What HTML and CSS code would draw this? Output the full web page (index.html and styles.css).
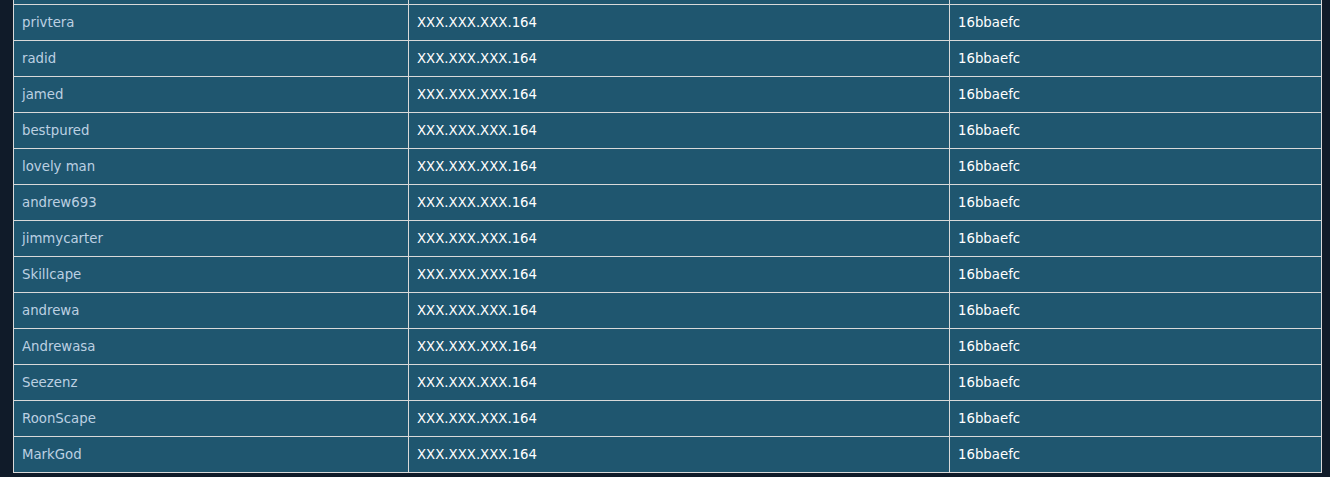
FILE: index.html
```html
<!DOCTYPE html>
<html>
<head>
<meta charset="utf-8">
<link rel="stylesheet" href="styles.css">
</head>
<body>
<div class="page">
  <table class="grid">
    <colgroup><col class="c1"><col class="c2"><col class="c3"></colgroup>
    <tbody>
      <tr class="offscreen"><td class="name"></td><td></td><td></td></tr>
      <tr><td class="name">privtera</td><td>XXX.XXX.XXX.164</td><td>16bbaefc</td></tr>
      <tr><td class="name">radid</td><td>XXX.XXX.XXX.164</td><td>16bbaefc</td></tr>
      <tr><td class="name">jamed</td><td>XXX.XXX.XXX.164</td><td>16bbaefc</td></tr>
      <tr><td class="name">bestpured</td><td>XXX.XXX.XXX.164</td><td>16bbaefc</td></tr>
      <tr><td class="name">lovely man</td><td>XXX.XXX.XXX.164</td><td>16bbaefc</td></tr>
      <tr><td class="name">andrew693</td><td>XXX.XXX.XXX.164</td><td>16bbaefc</td></tr>
      <tr><td class="name">jimmycarter</td><td>XXX.XXX.XXX.164</td><td>16bbaefc</td></tr>
      <tr><td class="name">Skillcape</td><td>XXX.XXX.XXX.164</td><td>16bbaefc</td></tr>
      <tr><td class="name">andrewa</td><td>XXX.XXX.XXX.164</td><td>16bbaefc</td></tr>
      <tr><td class="name">Andrewasa</td><td>XXX.XXX.XXX.164</td><td>16bbaefc</td></tr>
      <tr><td class="name">Seezenz</td><td>XXX.XXX.XXX.164</td><td>16bbaefc</td></tr>
      <tr><td class="name">RoonScape</td><td>XXX.XXX.XXX.164</td><td>16bbaefc</td></tr>
      <tr><td class="name">MarkGod</td><td>XXX.XXX.XXX.164</td><td>16bbaefc</td></tr>
    </tbody>
  </table>
</div>
</body>
</html>
```

FILE: styles.css
```css
html, body {
  margin: 0;
  padding: 0;
  background: #101b29;
  height: 100%;
  overflow: hidden;
}
.page {
  padding: 0 0 0 13px;
  margin-top: -32px;
  font-family: "DejaVu Sans", Verdana, sans-serif;
  font-size: 13.3px;
}
.grid {
  border-collapse: collapse;
  table-layout: fixed;
  width: 1308px;
  background: #1f566f;
}
.c1 { width: 395px; }
.c2 { width: 541px; }
.c3 { width: 372px; }
.grid td {
  border: 1px solid #d9d9d9;
  height: 36px;
  padding: 0 8px;
  box-sizing: border-box;
  color: #ffffff;
  vertical-align: middle;
  white-space: nowrap;
}
.grid td.name {
  color: #bcd0e2;
}
```
